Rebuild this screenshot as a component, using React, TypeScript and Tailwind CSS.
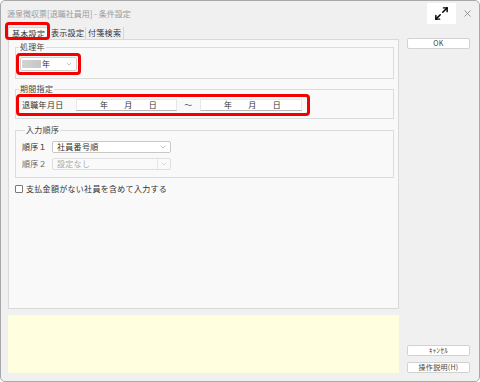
import React from "react";
import { Maximize2, ChevronDown } from "lucide-react";

function Btn({ children }: { children: React.ReactNode }) {
  return (
    <div className="w-[63px] h-[11px] bg-white border border-[#d2d2d2] rounded-[2px] flex items-center justify-center text-[7px] leading-[9px] text-[#444]">
      {children}
    </div>
  );
}

function DateBox({ w }: { w: string }) {
  return (
    <div className={`${w} h-[12px] bg-white border border-[#e6e6e6] border-b-[#b8b8b8] flex items-center pl-[23px] gap-[16px] text-[#333]`}>
      <span>年</span>
      <span>月</span>
      <span>日</span>
    </div>
  );
}

export default function App() {
  return (
    <div className="w-[480px] h-[382px] bg-[#f0f0f0] border border-[#a8a8a8] rounded-[5px] font-['Noto_Sans_CJK_JP','Noto_Sans',sans-serif] text-[8px] leading-[10px] tracking-[0.3px] text-[#333] overflow-hidden flex flex-col">
      {/* title bar */}
      <div className="h-[26px] shrink-0 flex items-start">
        <span className="mt-[8px] ml-[6px] text-[#9a9a9a] tracking-[0px]">源泉徴収票[退職社員用] - 条件設定</span>
        <div className="ml-auto flex items-start">
          <div className="mt-[2px] w-[29px] h-[21px] bg-white flex items-center justify-center">
            <Maximize2 size={15} strokeWidth={2.3} color="#000" />
          </div>
          <div className="w-[23px] h-[21px] mt-[2px] flex items-center justify-center">
            <svg width="7" height="7" viewBox="0 0 7 7">
              <path d="M0.5 0.5L6.5 6.5M6.5 0.5L0.5 6.5" stroke="#8a8a8a" strokeWidth="0.9" />
            </svg>
          </div>
        </div>
      </div>

      {/* content */}
      <div className="flex pl-[7px]">
        {/* left column */}
        <div className="w-[391px] flex flex-col">
          {/* tabs */}
          <div className="h-[12px] flex">
            <div className="relative w-[41px] h-[12px] bg-[#f9f9f9] border-t border-l border-r border-[#d5d5d5] pl-[3px] flex items-center">
              <span>基本設定</span>
              <div className="absolute -left-[4px] -top-[6px] w-[45px] h-[18px] border-[3px] border-[#f40000] rounded-[4px]" />
            </div>
            <div className="w-[37px] h-[12px] pl-[2px] border-r border-[#d5d5d5] flex items-center">表示設定</div>
            <div className="w-[38px] h-[12px] pl-[2px] border-r border-[#d5d5d5] flex items-center">付箋検索</div>
          </div>

          {/* panel */}
          <div className="h-[270px] bg-[#f9f9f9] border border-[#d9d9d9] pl-[6px] pr-[4px] pt-[2px] flex flex-col">
            {/* 処理年 */}
            <fieldset className="border border-[#dcdcdc] pb-[3px]">
              <legend className="ml-[3px] px-[1px] text-[#444]">処理年</legend>
              <div className="mt-[1px] w-[65px] border-[3px] border-[#f40000] rounded-[4px] p-[1px]">
                <div className="h-[14px] bg-white border border-[#cfcfcf] rounded-[2px] flex items-center">
                  <div className="ml-[1px] w-[19px] h-[8px] bg-gradient-to-r from-[#d4d4d4] to-[#c6c6c6]" />
                  <span className="ml-[1px]">年</span>
                  <ChevronDown size={8} strokeWidth={1.5} color="#888" className="ml-auto mr-[3px]" />
                </div>
              </div>
            </fieldset>

            {/* 期間指定 */}
            <fieldset className="mt-[5px] border border-[#dcdcdc] pb-[2px]">
              <legend className="ml-[3px] px-[1px] text-[#444]">期間指定</legend>
              <div className="w-[294px] border-[3px] border-[#f40000] rounded-[4px] py-[2px] pl-[3px] flex items-center">
                <span className="w-[54px]">退職年月日</span>
                <DateBox w="w-[101px]" />
                <span className="w-[23px] text-center text-[#555]">～</span>
                <DateBox w="w-[102px]" />
              </div>
            </fieldset>

            {/* 入力順序 */}
            <fieldset className="mt-[6px] border border-[#dcdcdc] pl-[6px] pt-[6px] pb-[7px] flex flex-col gap-[5px]">
              <legend className="ml-[3px] px-[1px] text-[#444]">入力順序</legend>
              <div className="flex items-center">
                <span className="w-[30px]">順序１</span>
                <div className="w-[119px] h-[12px] bg-white border border-[#c8c8c8] rounded-[2px] flex items-center pl-[4px]">
                  <span>社員番号順</span>
                  <ChevronDown size={8} strokeWidth={1.5} color="#888" className="ml-auto mr-[3px]" />
                </div>
              </div>
              <div className="flex items-center">
                <span className="w-[30px] text-[#666]">順序２</span>
                <div className="w-[119px] h-[12px] bg-[#fafafa] border border-[#dedede] rounded-[2px] flex items-center pl-[4px] text-[#aaa]">
                  <span>設定なし</span>
                  <div className="ml-auto h-full border-l border-[#e4e4e4] w-[13px] flex items-center justify-center">
                    <ChevronDown size={8} strokeWidth={1.5} color="#bbb" />
                  </div>
                </div>
              </div>
            </fieldset>

            {/* checkbox */}
            <div className="mt-[6px] flex items-center h-[10px]">
              <div className="w-[8px] h-[8px] bg-white border border-[#7a7a7a] rounded-[1px]" />
              <span className="ml-[3px]">支払金額がない社員を含めて入力する</span>
            </div>
          </div>

          {/* yellow area */}
          <div className="mt-[6px] h-[58px] bg-[#ffffe0]" />
        </div>

        {/* right column */}
        <div className="ml-[8px] flex flex-col">
          <div className="mt-[11px]">
            <Btn>OK</Btn>
          </div>
          <div className="mt-auto">
            <Btn>ｷｬﾝｾﾙ</Btn>
          </div>
          <div className="mt-[6px]">
            <Btn>操作説明(H)</Btn>
          </div>
        </div>
      </div>
    </div>
  );
}
